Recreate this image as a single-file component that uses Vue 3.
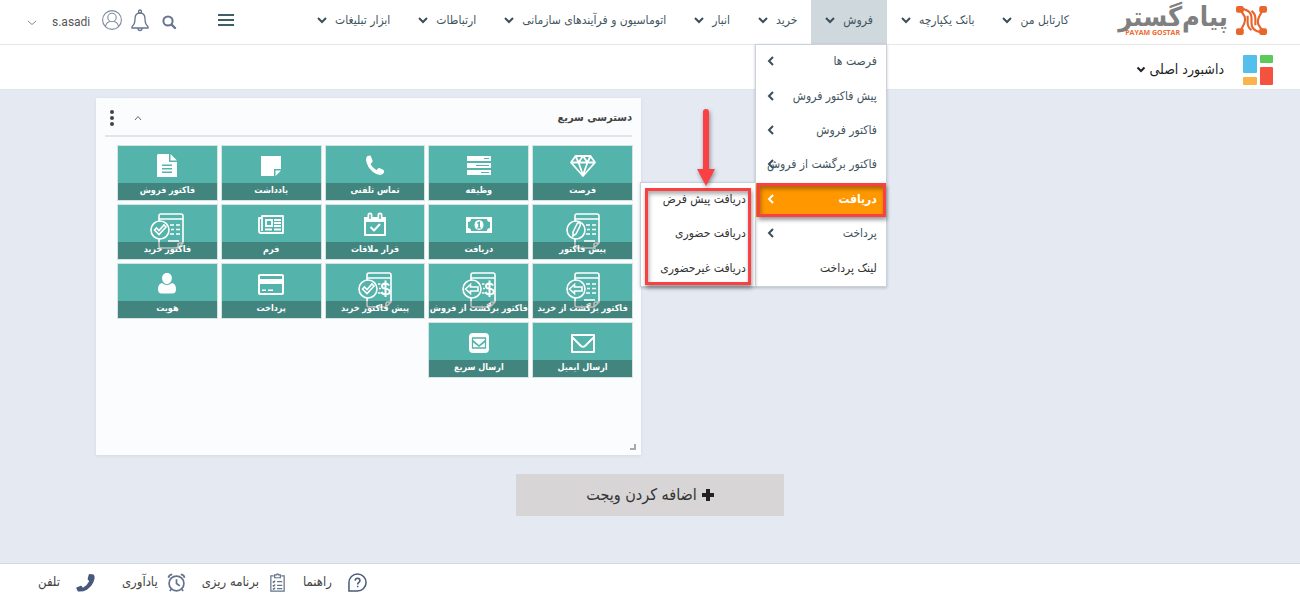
<script setup>
const nav = ['کارتابل من', 'بانک یکپارچه', 'فروش', 'خرید', 'انبار', 'اتوماسیون و فرآیندهای سازمانی', 'ارتباطات', 'ابزار تبلیغات']
const menu = [
  { t: 'فرصت ها', sub: true },
  { t: 'پیش فاکتور فروش', sub: true },
  { t: 'فاکتور فروش', sub: true },
  { t: 'فاکتور برگشت از فروش', sub: true },
  { t: 'دریافت', sub: true, active: true },
  { t: 'پرداخت', sub: true },
  { t: 'لینک پرداخت', dark: true },
]
const subMenu = ['دریافت پیش فرض', 'دریافت حضوری', 'دریافت غیرحضوری']
const tiles = [
  { t: 'فرصت', i: 'gem' }, { t: 'وظیفه', i: 'tasks' }, { t: 'تماس تلفنی', i: 'phone' }, { t: 'یادداشت', i: 'note' }, { t: 'فاکتور فروش', i: 'file' },
  { t: 'پیش فاکتور', i: 'doc', mark: 'pen', body: 'lines' }, { t: 'دریافت', i: 'money' }, { t: 'قرار ملاقات', i: 'cal' }, { t: 'فرم', i: 'news' }, { t: 'فاکتور خرید', i: 'doc', mark: 'check', body: 'lines' },
  { t: 'فاکتور برگشت از خرید', i: 'doc', mark: 'back', body: 'lines' }, { t: 'فاکتور برگشت از فروش', i: 'doc', mark: 'back', body: 'dollar' }, { t: 'پیش فاکتور خرید', i: 'doc', mark: 'check', body: 'dollar' }, { t: 'پرداخت', i: 'card' }, { t: 'هویت', i: 'user' },
  { t: 'ارسال ایمیل', i: 'mail' }, { t: 'ارسال سریع', i: 'mailbox' },
]
</script>

<template>
  <div class="page" dir="rtl">
    <header class="top">
      <a class="logo" href="#" aria-label="پیام گستر">
        <svg class="mark" viewBox="0 0 32 32" aria-hidden="true">
          <g fill="none" stroke="#e8662c" stroke-width="2.2">
            <path d="M4 4l5 8q1 4-.5 7L4 28M28 4l-4.500 9q-1.500 3-.5 7l5 8" />
            <path d="M7 4q9 2 9 9v6q0 7 9 9M12 11v7q0 5 4 8M16 6q4 3 4 8v7" />
          </g>
          <g fill="#e8662c"><rect x="0" y="1" width="8" height="7" rx="2" /><rect x="24" y="1" width="8" height="7" rx="2" /><rect x="0" y="24" width="8" height="7" rx="2" /><rect x="24" y="24" width="8" height="7" rx="2" /></g>
        </svg>
        <span class="brand"><b>پیام‌گستر</b><small dir="ltr">PAYAM GOSTAR</small></span>
      </a>
      <nav class="nav">
        <div v-for="n in nav" :key="n" class="nav-item" :class="{ open: n === 'فروش' }">
          <button class="nav-btn">
            {{ n }}
            <svg class="chev" viewBox="0 0 10 7"><path d="M1 1l4 4 4-4" /></svg>
          </button>
          <ul v-if="n === 'فروش'" class="menu">
            <li v-for="m in menu" :key="m.t" :class="{ active: m.active, dark: m.dark }">
              <a href="#">{{ m.t }}</a>
              <svg v-if="m.sub" class="side" viewBox="0 0 7 10"><path d="M6 1L2 5l4 4" /></svg>
              <template v-if="m.active">
                <span class="frame"></span>
                <div class="submenu">
                  <ul>
                    <li v-for="s in subMenu" :key="s"><a href="#">{{ s }}</a></li>
                  </ul>
                  <span class="frame sub-frame"></span>
                </div>
                <svg class="arrow" viewBox="0 0 24 84"><path d="M9 5a3 3 0 0 1 6 0v57h6L12 79 3 62h6z" /></svg>
              </template>
            </li>
          </ul>
        </div>
      </nav>
      <button class="burger" aria-label="منو"><svg viewBox="0 0 16 12"><path d="M0 1h16M0 6h16M0 11h16" /></svg></button>
      <div class="tools">
        <button class="search" aria-label="جستجو"><svg class="s14" viewBox="0 0 14 14" fill="none" stroke="#65748f"><circle cx="6" cy="6" r="4.6" stroke-width="2" /><path d="M9.500 9.500L13 13" stroke-width="2.400" stroke-linecap="round" /></svg></button>
        <button aria-label="اعلان‌ها"><svg class="bell" viewBox="0 0 18 22" fill="none" stroke="#65748f" stroke-width="1.300"><circle cx="9" cy="2.500" r="1.500" /><path d="M9 4c-4 0-5 3-5 6 0 4-1 6-3 7.500V19h16v-1.500c-2-1.500-3-3.500-3-7.500 0-3-1-6-5-6zM7 19.500a2 2 0 0 0 4 0" /></svg></button>
        <button class="account">
          <svg class="s20" viewBox="0 0 20 20" fill="none" stroke="#7f899d" stroke-width="1.100"><circle cx="10" cy="10" r="9.400" /><circle cx="10" cy="7.500" r="4.200" /><path d="M3.500 16.500c.5-3 2-4.500 4.500-5M16.500 16.500c-.5-3-2-4.500-4.500-5" /></svg>
          <span>s.asadi</span>
          <svg class="thin" viewBox="0 0 10 6"><path d="M1 1l4 3.500L9 1" /></svg>
        </button>
      </div>
    </header>

    <div class="sub">
      <svg class="dash" viewBox="0 0 30 30"><rect width="14" height="18" rx="1" fill="#55bfec" /><rect y="22" width="14" height="8" rx="1" fill="#fbb44b" /><rect x="17" width="13" height="8" rx="1" fill="#5acb59" /><rect x="17" y="12" width="13" height="18" rx="1" fill="#f4523f" /></svg>
      <button class="dash-btn">داشبورد اصلی <svg viewBox="0 0 10 7"><path d="M1.500 1.500L5 5l3.500-3.500" /></svg></button>
    </div>

    <main class="main">
      <section class="widget">
        <div class="w-head">
          <h2>دسترسی سریع</h2>
          <button aria-label="جمع کردن"><svg class="up" viewBox="0 0 8 6"><path d="M1 5l3-3.500L7 5" /></svg></button>
          <button aria-label="گزینه‌ها"><svg class="dots" viewBox="0 0 4 16"><circle cx="2" cy="2" r="2" /><circle cx="2" cy="8" r="2" /><circle cx="2" cy="14" r="2" /></svg></button>
        </div>
        <div class="tiles">
          <button v-for="t in tiles" :key="t.t" class="tile">
            <svg v-if="t.i === 'doc'" class="ic big" viewBox="0 0 34 36" fill="none" stroke="#fff" stroke-width="1.600">
              <path d="M9 9V3q0-2 2-2h20q2 0 2 2v27l-5 5H11q-2 0-2-2v-7M9 6h24M28 35v-3q0-2 2-2h3" />
              <circle cx="10" cy="17" r="9" />
              <g v-if="t.mark === 'pen'"><path d="M7 19l4-8q1-2 2.500-1t.5 3l-4 8-3 2z" /></g>
              <path v-else-if="t.mark === 'check'" d="M4.500 17l2-2 2.500 2.500 5-5.500 2 2-7 7.500z" />
              <path v-else d="M3.500 17l5-4.500V15H16v4H8.500v2.500z" />
              <path v-if="t.body === 'lines'" d="M20 12h4m2 0h4M21 16.500h3m2 0h4M20 21h4m2 0h4M18 28h11" />
              <g v-else><path d="M20 12h2.500M21 16.500h2M20 21h2.500" /><path d="M31 13.500q-1-2-3.500-2-3.500 0-3.500 2.500t3.500 2.700q4.200 .3 4.200 3 0 2.600-4 2.600-3.400 0-4.400-2.300M27.500 8.500v16.500" stroke-width="2" /></g>
            </svg>
            <svg v-else class="ic" viewBox="0 0 28 24" fill="#fff">
              <path v-if="t.i === 'gem'" fill="none" stroke="#fff" stroke-width="1.800" stroke-linejoin="round" d="M6.500 2h15L26 8.500 14 22 2 8.500zM2 8.500h24M9.500 8.500L14 21l4.500-12.500M6.500 2l3 6.500L14 2l4.500 6.500 3-6.500" />
              <path v-else-if="t.i === 'tasks'" fill-rule="evenodd" d="M2 2h24v5H2zM2 9h24v5H2zM2 16h24v5H2zM19 4v1h5V4zM11 11v1h13v-1zM16 18v1h8v-1z" />
              <path v-else-if="t.i === 'phone'" d="M9 1.500L6.500 2Q5 3 5 6q1 7 7 12 4 3 7 3 3-.5 4-2.500.5-2-.5-2.500l-4-2q-1-.5-2 1l-1 1.200Q11 13.500 9.500 10L11 8.500q1-1 .5-2L10 2.500Q9.500 1.500 9 1.500z" />
              <path v-else-if="t.i === 'note'" d="M4 2h20v13h-7v7H4zM18.500 16.500H24L18.500 22z" />
              <path v-else-if="t.i === 'file'" fill-rule="evenodd" d="M5 0h11v8h8v15H4V1zM17.500 0L24 6.500h-6.500zM9 10.500V12h10v-1.500zM9 14v1.500h10V14zM9 17.500V19h10v-1.500z" />
              <path v-else-if="t.i === 'money'" fill-rule="evenodd" d="M1 4h26v16H1zM6 6q0 3-3 3v6q3 0 3 3h16q0-3 3-3V9q-3 0-3-3zM14 7c6 0 6 10 0 10S8 7 14 7zM12 10.500h1.300v4H12v1h4v-1h-1V8.500h-1.200L12 9.800z" />
              <g v-else-if="t.i === 'cal'"><path fill="none" stroke="#fff" stroke-width="2" stroke-linejoin="round" d="M4 5h20v17H4zM9.500 14l3.500 3.500 6-6.500" /><path d="M3 4h22v5H3zM6.500 2q0-2.500 2.500-2.500T11.500 2v3h-5zM16.500 2q0-2.500 2.500-2.500T21.500 2v3h-5z" /><path stroke="#54b3aa" stroke-width="1.500" d="M9 1.500V6M19 1.500V6" /></g>
              <g v-else-if="t.i === 'news'" fill="none" stroke="#fff" stroke-width="1.800"><path d="M5 3h21v17H4q-2 0-2-2V5h3zM5 5v13" stroke-linejoin="round" /><path d="M9 7h6v6H9zM17 7h7M17 10h7M17 13h7M8 16.500h7M17 16.500h7" /></g>
              <path v-else-if="t.i === 'card'" fill-rule="evenodd" d="M3 2h22q2 0 2 2v17q0 2-2 2H3q-2 0-2-2V4q0-2 2-2zM3 4v3h22V4zM3 12v9h22v-9zM5 17.500h4V19H5zM11 17.500h5V19h-5z" />
              <path v-else-if="t.i === 'user'" d="M14 1c7 0 6 11 0 11S7 1 14 1zM9 11q5 4 10 0 4 1 4 6 0 4.500-3.500 4.500h-11Q5 21.500 5 17q0-5 4-6z" />
              <path v-else-if="t.i === 'mail'" fill="none" stroke="#fff" stroke-width="2" stroke-linejoin="round" d="M3 4h22v17H3zM3 6l9 9q2 1.500 4 0l9-9" />
              <g v-else><rect x="4" y="2" width="20" height="20" rx="4" /><path fill="none" stroke="#54b3aa" stroke-width="1.300" d="M7.500 7h13v10h-13z" /><path fill="#54b3aa" d="M7.500 8.500L14 14l6.500-5.500V11L14 16l-6.500-5z" /></g>
            </svg>
            <span>{{ t.t }}</span>
          </button>
        </div>
        <svg class="grip" viewBox="0 0 6 6"><path d="M5 0v5H0" /></svg>
      </section>
      <button class="add"><svg viewBox="0 0 12 12"><path d="M6 0v12M0 6h12" /></svg>اضافه کردن ویجت</button>
    </main>

    <footer class="foot">
      <a href="#" class="wide"><svg viewBox="0 0 20 20" fill="none" stroke="#495b78" stroke-width="1.600"><path d="M1 19V10a9 9 0 1 1 9 9zM7.500 8q.2-2.500 2.600-2.500T12.600 8q0 1.300-1.400 2.200-1 .7-1 1.900M10.200 13.500v1.600" /></svg>راهنما</a>
      <a href="#"><svg viewBox="0 0 20 20" fill="none" stroke="#63738c" stroke-width="1.300"><path d="M6 3H3v16h14V3h-3M7 5V2h2q1-2 2 0h2v3zM5 9l1 1 1.500-2M9.500 9H15M5 13l1 1 1.500-2M9.500 13H15M5 16.500l1 .5 1.500-1.500M9.500 16.500H15" /></svg>برنامه ریزی</a>
      <a href="#"><svg viewBox="0 0 20 20" fill="none" stroke="#63738c" stroke-width="1.800"><circle cx="10" cy="11" r="7.800" /><path d="M10 6.500V11l3.500 2.500M1.500 5q.5-3 4-3.500M18.500 5q-.5-3-4-3.500M4.500 17l-1.500 2M15.500 17l1.500 2" /></svg>یادآوری</a>
      <a href="#" class="wide"><svg viewBox="0 0 20 20" fill="#46597c"><path d="M14.500 1l4 .500q1.500 1.500 1 4.500-1.500 7-8 11.500-4 2.500-9.500 2l-1.500-3q-.5-1 .5-1.500l4-1.500q1-.2 1.500 1l.8 1q4.700-2.500 6.700-7L13 7.500q-1-.5-.7-1.500l1-4q.2-1 1.200-1z" /></svg>تلفن</a>
    </footer>
  </div>
</template>

<style>
body { margin: 0; }
</style>
<style scoped>
* { box-sizing: border-box; }
.page { min-height: 100vh; display: flex; flex-direction: column; background: #e4e9f2; font: 12px/20px "DejaVu Sans Condensed", "DejaVu Sans", sans-serif; color: #3f5560; }
button { font: inherit; color: inherit; background: none; border: 0; padding: 0; margin: 0; }
a { color: inherit; text-decoration: none; }
ul { list-style: none; margin: 0; padding: 0; }
svg { display: block; flex: none; overflow: visible; }
.top { height: 45px; background: #fff; border-bottom: 1px solid #e4e6e8; display: flex; align-items: stretch; padding: 0 33px 0 27px; position: relative; z-index: 2; }
.logo { flex: none; display: flex; gap: 8px; width: 152px; padding-top: 5px; }
.mark { width: 31px; height: 31px; }
.brand { display: flex; flex-direction: column; align-items: flex-start; color: #808080; white-space: nowrap; }
.brand b { font-size: 27px; line-height: 23px; }
.brand small { font: bold 7px/10px "Open Sans", sans-serif; color: #ee6b2d; padding-right: 48px; }
.nav { display: flex; margin-right: 32px; }
.nav-item { position: relative; }
.nav-item.open { background: #ced8dd; }
.nav-btn { height: 44px; padding: 0 14px 4px; display: flex; align-items: center; gap: 8px; white-space: nowrap; }
.chev, .side { fill: none; stroke: #3a4f5a; stroke-width: 2; }
.chev { width: 10px; height: 7px; }
.menu { position: absolute; top: 44px; right: 0; width: 132px; height: 243px; display: grid; grid-template-columns: 100%; grid-auto-rows: 1fr; background: #fff; border: 1px solid #c9d2da; box-shadow: 0 1px 3px #0003; }
.menu li { position: relative; display: flex; align-items: center; padding: 0 9px 2px; white-space: nowrap; }
.side { position: absolute; left: 11px; width: 7px; height: 10px; }
.menu .active { background: #ff9800; color: #fff; font-weight: bold; }
.active .side { stroke: #fff; }
.menu .dark { color: #333; }
.frame { position: absolute; inset: 0 0 0 1px; border: 3px solid #f94144; box-shadow: 1px 3px 4px #0006, inset 1px 3px 4px #0005; }
.submenu { position: absolute; top: -1px; right: 100%; width: 116px; height: 105px; background: #fff; border: 1px solid #c9d2da; font-weight: normal; color: #333; box-shadow: 0 1px 3px #0003; }
.submenu ul { height: 100%; display: grid; grid-template: repeat(3, 1fr) / 100%; }
.sub-frame { inset: 5px 4px 1px; }
.arrow { position: absolute; width: 24px; height: 84px; right: 168px; bottom: 26px; fill: #f94144; filter: drop-shadow(1px 2px 2px #0006); }
.burger { margin-right: auto; padding-bottom: 5px; }
.burger svg { width: 16px; height: 12px; stroke: #3f5f68; stroke-width: 2; }
.tools { display: flex; align-items: center; gap: 9px; margin-right: 42px; padding-bottom: 4px; color: #555; }
.search { margin-left: 4px; padding-top: 3px; }
.s14 { width: 14px; height: 14px; }
.bell { width: 18px; height: 22px; }
.s20 { width: 20px; height: 20px; }
.account { display: flex; align-items: center; gap: 12px; font-family: Roboto, sans-serif; }
.account span { padding-top: 3px; }
.thin { width: 10px; height: 6px; fill: none; stroke: #7c8799; margin: 5px 3px 0 0; }
.sub { height: 45px; background: #fff; border-bottom: 1px solid #e3e5e9; display: flex; align-items: center; gap: 19px; padding: 5px 27px 0; }
.dash { width: 30px; height: 30px; }
.dash-btn { display: flex; align-items: center; gap: 3px; padding-bottom: 2px; font-size: 14px; color: #222; }
.dash-btn svg { width: 10px; height: 7px; margin-top: 2px; fill: none; stroke: #222; stroke-width: 2; }
.main { flex: 1; display: flex; flex-direction: column; padding: 8px 0 46px 96px; }
.widget { position: relative; align-self: flex-end; width: 545px; min-height: 357px; background: #fafcfe; padding: 0 9px; box-shadow: 0 1px 4px #0001; }
.w-head { height: 39px; border-bottom: 2px solid #e2e4e7; display: flex; align-items: center; gap: 20px; padding: 3px 0 0 5px; }
.w-head h2 { margin: 0 0 0 auto; font-size: 11px; font-weight: bold; color: #444; }
.up { width: 8px; height: 6px; fill: none; stroke: #666; }
.dots { width: 4px; height: 16px; fill: #444; }
.tiles { display: grid; grid-template-columns: repeat(5, 1fr); gap: 5px; padding: 9px 0 0 13px; }
.tile { position: relative; height: 54px; background: #54b3aa; outline: 1px solid #d5e3e3; display: flex; flex-direction: column; align-items: center; }
.ic { width: 28px; height: 24px; margin-top: 8px; }
.big { width: 34px; height: 36px; }
.tile span { position: absolute; inset: auto 0 0; padding-bottom: 2px; background: rgba(20, 10, 10, .27); color: #fff; font-size: 9px; line-height: 15px; font-weight: bold; white-space: nowrap; }
.grip { position: absolute; right: 5px; bottom: 5px; width: 6px; height: 6px; fill: none; stroke: #aaa; stroke-width: 2; }
.add { align-self: center; margin: 19px 96px 0 0; width: 268px; height: 42px; background: #d7d5d6; color: #333; font-size: 16px; display: flex; align-items: center; justify-content: center; gap: 5px; }
.add svg { width: 12px; height: 12px; stroke: #222; stroke-width: 4; }
.foot { height: 37px; background: #fff; border-top: 1px solid #d0d8e2; display: flex; justify-content: flex-end; gap: 16px; padding: 0 38px; font-size: 13px; color: #444; }
.foot a { display: flex; align-items: center; gap: 9px; }
.foot .wide { gap: 16px; }
.foot .wide:last-child { margin-right: 11px; }
.foot svg { width: 19px; height: 19px; }
</style>
